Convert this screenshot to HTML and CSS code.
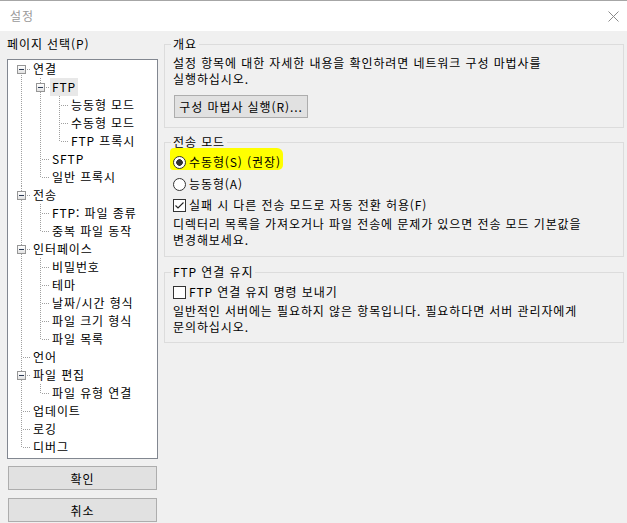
FILE: index.html
```html
<!DOCTYPE html>
<html lang="ko">
<head>
<meta charset="utf-8">
<title>설정</title>
<link rel="stylesheet" href="styles.css">
</head>
<body>
<div class="window">
  <header class="titlebar">
    <span class="title">설정</span>
    <svg class="close" width="11" height="11" viewBox="0 0 11 11"><path d="M0.5 0.5 L10.5 10.5 M10.5 0.5 L0.5 10.5" stroke="#8a8a8a" stroke-width="1" fill="none"/></svg>
  </header>
  <main class="content">
    <aside class="left">
      <div class="pane-label">페이지 선택(P)</div>
      <div class="tree">
        <ul class="tv root">
          <li><div class="row"><span class="exp"></span><span class="lbl">연결</span></div>
            <ul class="tv">
              <li><div class="row"><span class="exp"></span><span class="lbl sel">FTP</span></div>
                <ul class="tv">
                  <li><div class="row"><span class="lbl">능동형 모드</span></div></li>
                  <li><div class="row"><span class="lbl">수동형 모드</span></div></li>
                  <li><div class="row"><span class="lbl">FTP 프록시</span></div></li>
                </ul>
              </li>
              <li><div class="row"><span class="lbl">SFTP</span></div></li>
              <li><div class="row"><span class="lbl">일반 프록시</span></div></li>
            </ul>
          </li>
          <li><div class="row"><span class="exp"></span><span class="lbl">전송</span></div>
            <ul class="tv">
              <li><div class="row"><span class="lbl">FTP: 파일 종류</span></div></li>
              <li><div class="row"><span class="lbl">중복 파일 동작</span></div></li>
            </ul>
          </li>
          <li><div class="row"><span class="exp"></span><span class="lbl">인터페이스</span></div>
            <ul class="tv">
              <li><div class="row"><span class="lbl">비밀번호</span></div></li>
              <li><div class="row"><span class="lbl">테마</span></div></li>
              <li><div class="row"><span class="lbl">날짜/시간 형식</span></div></li>
              <li><div class="row"><span class="lbl">파일 크기 형식</span></div></li>
              <li><div class="row"><span class="lbl">파일 목록</span></div></li>
            </ul>
          </li>
          <li><div class="row"><span class="lbl">언어</span></div></li>
          <li><div class="row"><span class="exp"></span><span class="lbl">파일 편집</span></div>
            <ul class="tv">
              <li><div class="row"><span class="lbl">파일 유형 연결</span></div></li>
            </ul>
          </li>
          <li><div class="row"><span class="lbl">업데이트</span></div></li>
          <li><div class="row"><span class="lbl">로깅</span></div></li>
          <li><div class="row"><span class="lbl">디버그</span></div></li>
        </ul>
      </div>
      <button class="btn side-btn ok">확인</button>
      <button class="btn side-btn cancel">취소</button>
    </aside>
    <section class="right">
      <fieldset class="group g-overview">
        <legend>개요</legend>
        <p class="desc"><span class="line">설정 항목에 대한 자세한 내용을 확인하려면 네트워크 구성 마법사를</span><span class="line">실행하십시오.</span></p>
        <button class="btn wizard">구성 마법사 실행(R)...</button>
      </fieldset>
      <fieldset class="group g-mode">
        <legend>전송 모드</legend>
        <div class="opt opt-first"><span class="hl"><span class="radio on"></span><span class="opt-text">수동형(S) (권장)</span></span></div>
        <div class="opt opt-second"><span class="radio"></span><span class="opt-text">능동형(A)</span></div>
        <div class="opt opt-check"><span class="check on"><svg width="11" height="11" viewBox="0 0 11 11"><path d="M1.5 5.5 L4 8 L9.5 2.5" stroke="#222" stroke-width="1.1" fill="none"/></svg></span><span class="opt-text">실패 시 다른 전송 모드로 자동 전환 허용(F)</span></div>
        <p class="desc desc-mode"><span class="line">디렉터리 목록을 가져오거나 파일 전송에 문제가 있으면 전송 모드 기본값을</span><span class="line">변경해보세요.</span></p>
      </fieldset>
      <fieldset class="group g-keep">
        <legend>FTP 연결 유지</legend>
        <div class="opt opt-keep"><span class="check"></span><span class="opt-text">FTP 연결 유지 명령 보내기</span></div>
        <p class="desc"><span class="line">일반적인 서버에는 필요하지 않은 항목입니다. 필요하다면 서버 관리자에게</span><span class="line">문의하십시오.</span></p>
      </fieldset>
    </section>
  </main>
</div>
</body>
</html>
```
FILE: styles.css
```css
html, body {
  margin: 0;
  padding: 0;
}
body {
  width: 627px;
  height: 523px;
  overflow: hidden;
  background: #f0f0f0;
  font-family: "Noto Sans CJK KR", "Noto Sans", sans-serif;
  font-size: 12px;
  letter-spacing: 0.9px;
  color: #000;
}
.window {
  width: 627px;
  height: 523px;
  display: flex;
  flex-direction: column;
}
.titlebar {
  box-sizing: border-box;
  height: 31px;
  border-top: 1px solid #a6a6a6;
  background: #fff;
  display: flex;
  align-items: center;
  justify-content: space-between;
  padding: 0 8px 0 10px;
}
.title {
  color: #9a9a9a;
  line-height: 16px;
}
.close {
  display: block;
}
.content {
  flex: 1;
  display: flex;
  gap: 6px;
  padding: 5px 3px 0 7px;
}
.left {
  width: 151px;
  flex: none;
  display: flex;
  flex-direction: column;
}
.pane-label {
  line-height: 16px;
  height: 16px;
}
.tree {
  margin-top: 7px;
  box-sizing: border-box;
  height: 400px;
  border: 1px solid #828790;
  background: #fff;
  overflow: hidden;
}
.tv {
  list-style: none;
  margin: 0;
  padding: 0;
}
.tv .tv {
  padding-left: 19px;
}
.tv li {
  position: relative;
}
.tv li::before {
  content: "";
  position: absolute;
  left: 13px;
  top: 0;
  bottom: 0;
  width: 1px;
  background: repeating-linear-gradient(to bottom, #a0a0a0 0 1px, transparent 1px 2px);
}
.tv li:last-child::before {
  bottom: auto;
  height: 10px;
}
.root > li:first-child::before {
  top: 9px;
}
.row {
  position: relative;
  height: 18px;
  padding-left: 23px;
  display: flex;
  align-items: center;
}
.row::before {
  content: "";
  position: absolute;
  left: 15px;
  top: 9px;
  width: 8px;
  height: 1px;
  background: repeating-linear-gradient(to right, #a0a0a0 0 1px, transparent 1px 2px);
}
.exp {
  position: absolute;
  left: 9px;
  top: 5px;
  width: 9px;
  height: 9px;
  box-sizing: border-box;
  border: 1px solid #969696;
  background: linear-gradient(#ffffff, #e2e2e2);
  z-index: 1;
}
.exp::after {
  content: "";
  position: absolute;
  left: 1px;
  top: 3px;
  width: 5px;
  height: 1px;
  background: #2b3a55;
}
.lbl {
  line-height: 18px;
  padding: 0 2px;
  white-space: nowrap;
}
.lbl.sel {
  background: #e8e8e8;
}
.btn {
  font-family: inherit;
  font-size: 12px;
  letter-spacing: 0.9px;
  color: #000;
  background: #e1e1e1;
  border: 1px solid #adadad;
  border-radius: 0;
  padding: 0;
  margin: 0;
  box-sizing: border-box;
}
.side-btn {
  width: 149px;
  height: 24px;
  margin-left: 1px;
}
.ok {
  margin-top: 7px;
}
.cancel {
  margin-top: 8px;
}
.right {
  width: 460px;
  flex: none;
  display: flex;
  flex-direction: column;
}
.group {
  margin: 0;
  border: 1px solid #dcdcdc;
  padding: 0 8px;
  min-width: 0;
}
.group legend {
  padding: 0 2px;
  margin-left: -2px;
  line-height: 16px;
  height: 16px;
}
.desc {
  margin: 0;
  line-height: 16px;
  white-space: nowrap;
}
.line {
  display: block;
  height: 16px;
}
.g-overview {
  padding-top: 3px;
  padding-bottom: 9px;
}
.wizard {
  display: block;
  margin-top: 8px;
  margin-left: 1px;
  width: 134px;
  height: 23px;
}
.g-mode {
  margin-top: 6px;
  padding-top: 1px;
  padding-bottom: 8px;
}
.g-keep {
  margin-top: 7px;
  padding-top: 1px;
  padding-bottom: 7px;
}
.opt {
  display: flex;
  align-items: center;
}
.opt-first, .opt-second {
  height: 22px;
}
.opt-check {
  height: 20px;
}
.opt-keep {
  height: 22px;
}
.desc-mode {
  margin-top: 1px;
}
.hl {
  position: relative;
  isolation: isolate;
  display: flex;
  align-items: center;
  height: 22px;
}
.hl::before {
  content: "";
  position: absolute;
  left: -3px;
  right: -2px;
  top: -3px;
  bottom: 3px;
  background: #ffff00;
  border-radius: 4px 6px 5px 3px;
  z-index: -1;
}
.radio {
  width: 13px;
  height: 13px;
  box-sizing: border-box;
  border: 1px solid #333;
  border-radius: 50%;
  background: #fff;
  flex: none;
}
.radio.on {
  background: radial-gradient(circle, #333 0 3px, #fff 3.6px);
}
.check {
  width: 13px;
  height: 13px;
  box-sizing: border-box;
  border: 1px solid #333;
  background: #fff;
  flex: none;
  display: flex;
}
.check svg {
  display: block;
}
.opt-text {
  margin-left: 3px;
  white-space: nowrap;
  line-height: 16px;
}
```
